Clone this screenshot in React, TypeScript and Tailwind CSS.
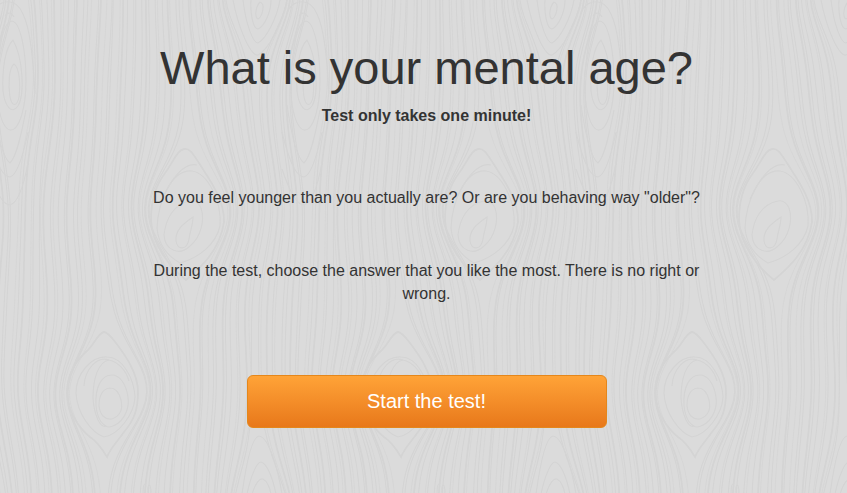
const TILE_W = 294;
const TILE_H = 496;

interface Knot {
  x: number;
  y: number;
  w: number;
  h: number;
  spread: number;
}

const KNOTS: Knot[] = [
  { x: 12, y: 84, w: 16, h: 76, spread: 30 },
  { x: 187, y: 212, w: 39, h: 58, spread: 48 },
  { x: 106, y: 392, w: 38, h: 56, spread: 48 },
  { x: 258, y: -8, w: 30, h: 54, spread: 40 },
  { x: 261, y: 520, w: 27, h: 66, spread: 40 },
];

// the grain runs top to bottom and bends away from every knot
const bend = (x0: number, y: number) => {
  let x = x0;
  for (const k of KNOTS) {
    let d = x0 - k.x;
    if (d > TILE_W / 2) d -= TILE_W;
    if (d < -TILE_W / 2) d += TILE_W;
    const t = (y - k.y) / k.h;
    x += Math.sign(d) * k.w * Math.exp(-Math.abs(d) / k.spread) * Math.exp(-t * t);
  }
  const phase = (x0 / TILE_W) * Math.PI * 2;
  return x + Math.sin(y / 60 + phase) * 2 + Math.sin(y / 31 - phase * 2) * 0.8;
};

const GRAIN = Array.from({ length: 60 }, (_, i) => {
  const x0 = i * (TILE_W / 60) + Math.sin(i * 2.4) * 1.4 + 0.3;
  const points: string[] = [];
  for (let y = 0; y <= TILE_H; y += 8) {
    points.push(`${bend(x0, y).toFixed(1)} ${y}`);
  }
  return { d: `M${points.join('L')}`, width: i % 5 === 0 ? 1.8 : i % 3 === 0 ? 0.8 : 1.1 };
});

const RINGS = [
  // left, narrow knot
  'M14 64C9 68 8 84 10 97C12 107 17 107 19 97C21 84 19 67 14 64Z',
  'M13 40C5 48 2 70 3 91C5 107 12 115 18 106C25 94 23 58 13 40Z',
  'M12 21C3 22 0 44-3 72C-5 101 1 128 10 130C20 131 26 105 26 81C26 49 20 22 12 21Z',
  'M-7 105C-3 132 3 158 10 163C17 156 22 131 26 110',
  'M-12 132C-6 157 1 177 10 177C18 175 24 151 28 132',
  'M-12 169C-5 190 2 205 10 205C18 203 24 184 28 163',
  'M5 16C8 11 12 13 14 17M-7 12C0-1 16-3 23 14C31 30 33 63 35 94',
  // centre knot
  'M193 217C183 224 175 230 176 241C178 251 187 250 189 239C190 231 193 225 193 217Z',
  'M190 201C174 204 166 218 164 235C165 251 180 256 190 246C201 237 205 220 201 208C198 202 194 200 190 201Z',
  'M192 171C171 169 158 203 157 228C159 249 171 258 180 263C199 258 216 244 220 226C222 200 207 173 192 171Z',
  'M197 165C184 162 172 178 162 199',
  // lower knot
  'M110 388C102 389 99 397 99 406C100 415 105 420 112 419C120 416 123 409 121 400C119 392 115 388 110 388Z',
  'M112 375C101 375 95 388 96 405C97 419 103 427 110 427C122 424 130 411 128 397C126 383 119 375 112 375Z',
  'M109 360C98 362 93 379 93 398C94 414 100 429 106 426',
  'M107 357C91 356 76 374 76 393C77 414 92 433 104 437C118 435 134 415 135 397C134 379 123 357 107 357Z',
  'M84 386C85 369 97 356 109 360C118 362 126 370 129 381',
  // top right knot
  'M260 2C256 6 254 17 258 19C262 17 266 4 260 2Z',
  'M251 0C250 13 253 29 258 29C265 26 271 11 271 0',
  'M243 0C246 25 253 43 258 43C266 39 277 18 280 0',
  'M233 0C239 31 251 56 258 55C268 50 283 23 287 0',
  // bottom right knot
  'M242 494C247 458 253 437 259 436C268 437 277 464 282 494',
  'M247 494C251 475 257 462 261 462C267 463 273 479 276 494',
  'M252 494C256 482 260 478 263 479C267 481 270 488 271 494',
  'M143 494C143 486 144 484 145 484M148 494C147 482 151 482 151 494',
];

const STRONG_RINGS = [
  'M184 149C177 150 173 163 163 176C154 189 151 204 151 220C152 246 171 268 186 280C199 269 220 251 224 222C225 199 207 176 199 163C193 154 190 148 184 149Z',
  'M104 332C98 333 96 342 88 350C74 362 67 375 67 393C68 413 80 429 90 437C98 442 104 452 107 457C111 447 118 441 124 432C134 420 138 410 138 392C138 372 124 354 116 343C110 335 107 332 104 332Z',
];

function WoodBackground() {
  return (
    <svg className="absolute inset-0 h-full w-full" aria-hidden="true">
      <defs>
        <pattern id="wood" width={TILE_W} height={TILE_H} patternUnits="userSpaceOnUse">
          {[-TILE_W, 0, TILE_W].map((offset) => (
            <g key={offset} transform={`translate(${offset} 0)`} fill="none" stroke="#d4d4d4">
              {GRAIN.map((line, i) => (
                <path key={i} d={line.d} strokeWidth={line.width} />
              ))}
              {RINGS.map((d) => (
                <path key={d} d={d} strokeWidth={1.2} />
              ))}
              {STRONG_RINGS.map((d) => (
                <path key={d} d={d} strokeWidth={1.8} />
              ))}
            </g>
          ))}
        </pattern>
      </defs>
      <rect width="100%" height="100%" fill="url(#wood)" />
    </svg>
  );
}

function App() {
  return (
    <div className="relative h-screen overflow-hidden bg-[#dbdbdb] font-['Liberation_Sans',Arial,sans-serif] text-[#333]">
      <WoodBackground />
      <main className="relative mx-auto flex w-[555px] translate-x-[3px] flex-col items-center pt-[41px] text-center text-base leading-[23px]">
        <h1 className="text-[47px] leading-[53px] whitespace-nowrap">What is your mental age?</h1>
        <p className="mt-[10px] font-bold">Test only takes one minute!</p>
        <p className="mt-[59px]">
          Do you feel younger than you actually are? Or are you behaving way "older"?
        </p>
        <p className="mt-[50px]">
          During the test, choose the answer that you like the most. There is no right or wrong.
        </p>
        <button
          type="button"
          className="mt-[70px] h-[53px] w-[360px] rounded-md border border-[#e5871b] bg-linear-to-b from-[#ffa337] to-[#e8781a] pb-0.5 text-xl text-white"
        >
          Start the test!
        </button>
      </main>
    </div>
  );
}

export default App;
